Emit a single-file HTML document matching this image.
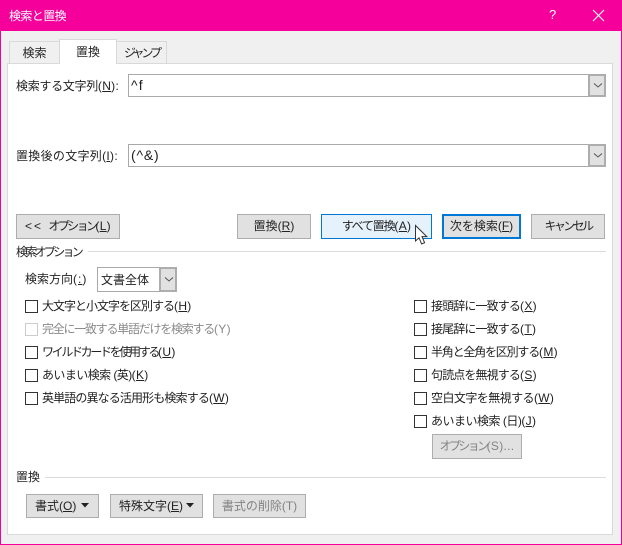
<!DOCTYPE html>
<html lang="ja"><head><meta charset="utf-8"><style>
html,body{margin:0;padding:0}
body{width:622px;height:545px;position:relative;overflow:hidden;background:#f0f0f0;font-family:"Liberation Sans","Noto Sans CJK JP",sans-serif;font-size:12px;color:#222}
div,span.a{position:absolute;box-sizing:border-box}
.t{white-space:nowrap;line-height:16px;height:16px}
.btn{background:#e1e1e1;border:1px solid #adadad;text-align:center;line-height:23px;white-space:nowrap}
.dis{color:#838383}
.input{background:#fff;border:1px solid #a9a9a9}
.dd{background:#e1e1e1;border:2px solid #adadad;width:18px}
.dd svg{position:absolute;left:3px;top:6px}
.cb{width:13px;height:13px;border:1px solid #333;background:#fff}
.line{height:1px;background:#dcdcdc}
u{text-underline-offset:1px}
i{font-style:normal;letter-spacing:.3px}
</style></head><body>
<div style="left:0;top:0;width:622px;height:545px;border:1px solid #f5009b"></div>
<div style="left:0;top:0;width:622px;height:31px;background:#f5009b"></div>
<div class="t" style="left:9px;top:8px;color:#fff;letter-spacing:-.6px">検索と置換</div>
<div class="t" style="left:549px;top:7px;color:#fff;font-size:13px">?</div>
<svg style="position:absolute;left:592px;top:9px" width="13" height="13"><path d="M1 1L12 12M12 1L1 12" stroke="#fff" stroke-width="1.1" fill="none"/></svg>

<div style="left:7px;top:63px;width:606px;height:472px;background:#fff;border:1px solid #d9d9d9"></div>
<div style="left:9px;top:41px;width:51px;height:23px;background:#f0f0f0;border:1px solid #d9d9d9;text-align:center;line-height:23px">検索</div>
<div style="left:116px;top:41px;width:51px;height:23px;background:#f0f0f0;border:1px solid #d9d9d9;text-align:center;line-height:23px;letter-spacing:-3px">ジャンプ</div>
<div style="left:59px;top:39px;width:58px;height:25px;background:#fff;border:1px solid #d9d9d9;border-bottom:0;text-align:center;line-height:25px">置換</div>

<div class="t" style="left:16px;top:78px;letter-spacing:-.3px">検索する文字列<i>(<u>N</u>):</i></div>
<div class="input" style="left:128px;top:74px;width:478px;height:23px"></div>
<div class="t" style="left:131px;top:77px;font-size:14px;letter-spacing:1.2px">^f</div>
<div class="dd" style="left:588px;top:74px;height:23px"><svg width="10" height="7"><path d="M1 1.5L5 5L9 1.5" stroke="#555" fill="none"/></svg></div>

<div class="t" style="left:16px;top:148px;letter-spacing:.3px">置換後の文字列<i>(<u>I</u>):</i></div>
<div class="input" style="left:128px;top:144px;width:478px;height:23px"></div>
<div class="t" style="left:131px;top:147px;font-size:14px;letter-spacing:.8px">(^&amp;)</div>
<div class="dd" style="left:588px;top:144px;height:23px"><svg width="10" height="7"><path d="M1 1.5L5 5L9 1.5" stroke="#555" fill="none"/></svg></div>

<div class="btn" style="left:16px;top:214px;width:104px;height:25px;letter-spacing:-2.6px"><span style="letter-spacing:2px">&lt;&lt;&nbsp;</span>オプション<i>(<u>L</u>)</i></div>
<div class="btn" style="left:237px;top:214px;width:74px;height:25px">置換(<u>R</u>)</div>
<div class="btn" style="left:321px;top:214px;width:111px;height:25px;background:#e5f1fb;border-color:#0078d7;letter-spacing:-1.2px">すべて置換<i>(<u>A</u>)</i></div>
<div class="btn" style="left:442px;top:214px;width:79px;height:25px;border:2px solid #0078d7;line-height:21px">次を検索(<u>F</u>)</div>
<div class="btn" style="left:531px;top:214px;width:74px;height:25px;letter-spacing:-2.6px">キャンセル</div>
<svg style="position:absolute;left:414px;top:224px" width="16" height="22"><path d="M1.5 1.5V17L5 13.8L7.6 20L10.6 18.7L8 12.6H12.8Z" fill="#fff" stroke="#333" stroke-width="1"/></svg>

<div class="t" style="left:16px;top:244px;letter-spacing:-2.7px">検索オプション</div>
<div class="line" style="left:88px;top:251px;width:518px"></div>

<div class="t" style="left:25px;top:271px">検索方向<i style="letter-spacing:1px">(<u>:</u>)</i></div>
<div style="left:97px;top:267px;width:80px;height:25px;background:#fff;border:1px solid #a9a9a9"></div>
<div class="t" style="left:101px;top:272px">文書全体</div>
<div class="dd" style="left:159px;top:267px;height:25px"><svg width="10" height="7" style="top:7px"><path d="M1 1.5L5 5L9 1.5" stroke="#555" fill="none"/></svg></div>

<div class="cb" style="left:25px;top:300px"></div><div class="t" style="left:42px;top:298px;letter-spacing:-1px">大文字と小文字を区別する<i>(<u>H</u>)</i></div>
<div class="cb" style="left:25px;top:323px;border-color:#ccc"></div><div class="t dis" style="left:42px;top:321px;color:#8a8a8a;letter-spacing:-1.25px">完全に一致する単語だけを検索する<i>(Y)</i></div>
<div class="cb" style="left:25px;top:346px"></div><div class="t" style="left:42px;top:344px;letter-spacing:-2.33px">ワイルドカードを使用する<i>(<u>U</u>)</i></div>
<div class="cb" style="left:25px;top:369px"></div><div class="t" style="left:42px;top:367px;letter-spacing:-.57px">あいまい検索 (英)<i>(<u>K</u>)</i></div>
<div class="cb" style="left:25px;top:392px"></div><div class="t" style="left:42px;top:390px;letter-spacing:-.87px">英単語の異なる活用形も検索する<i>(<u>W</u>)</i></div>

<div class="cb" style="left:414px;top:300px"></div><div class="t" style="left:431px;top:298px;letter-spacing:-.87px">接頭辞に一致する<i>(<u>X</u>)</i></div>
<div class="cb" style="left:414px;top:323px"></div><div class="t" style="left:431px;top:321px;letter-spacing:-.87px">接尾辞に一致する<i>(<u>T</u>)</i></div>
<div class="cb" style="left:414px;top:346px"></div><div class="t" style="left:431px;top:344px;letter-spacing:-1.2px">半角と全角を区別する<i>(<u>M</u>)</i></div>
<div class="cb" style="left:414px;top:369px"></div><div class="t" style="left:431px;top:367px;letter-spacing:-.87px">句読点を無視する<i>(<u>S</u>)</i></div>
<div class="cb" style="left:414px;top:392px"></div><div class="t" style="left:431px;top:390px;letter-spacing:-.56px">空白文字を無視する<i>(<u>W</u>)</i></div>
<div class="cb" style="left:414px;top:415px"></div><div class="t" style="left:431px;top:413px;letter-spacing:-.5px">あいまい検索 (日)<i>(<u>J</u>)</i></div>
<div class="btn dis" style="left:432px;top:434px;width:90px;height:25px;letter-spacing:-2.6px">オプション<i>(S)...</i></div>

<div class="t" style="left:16px;top:469px">置換</div>
<div class="line" style="left:45px;top:477px;width:561px"></div>
<div class="btn" style="left:26px;top:494px;width:73px;height:24px;text-align:left;padding-left:8px;line-height:22px">書式(<u>O</u>)</div>
<svg style="position:absolute;left:81px;top:503px" width="8" height="5"><path d="M0 0H8L4 4.5Z" fill="#222"/></svg>
<div class="btn" style="left:110px;top:494px;width:93px;height:24px;text-align:left;padding-left:8px;line-height:22px">特殊文字(<u>E</u>)</div>
<svg style="position:absolute;left:186px;top:503px" width="8" height="5"><path d="M0 0H8L4 4.5Z" fill="#222"/></svg>
<div class="btn dis" style="left:213px;top:494px;width:93px;height:24px;line-height:22px">書式の削除(T)</div>
</body></html>
